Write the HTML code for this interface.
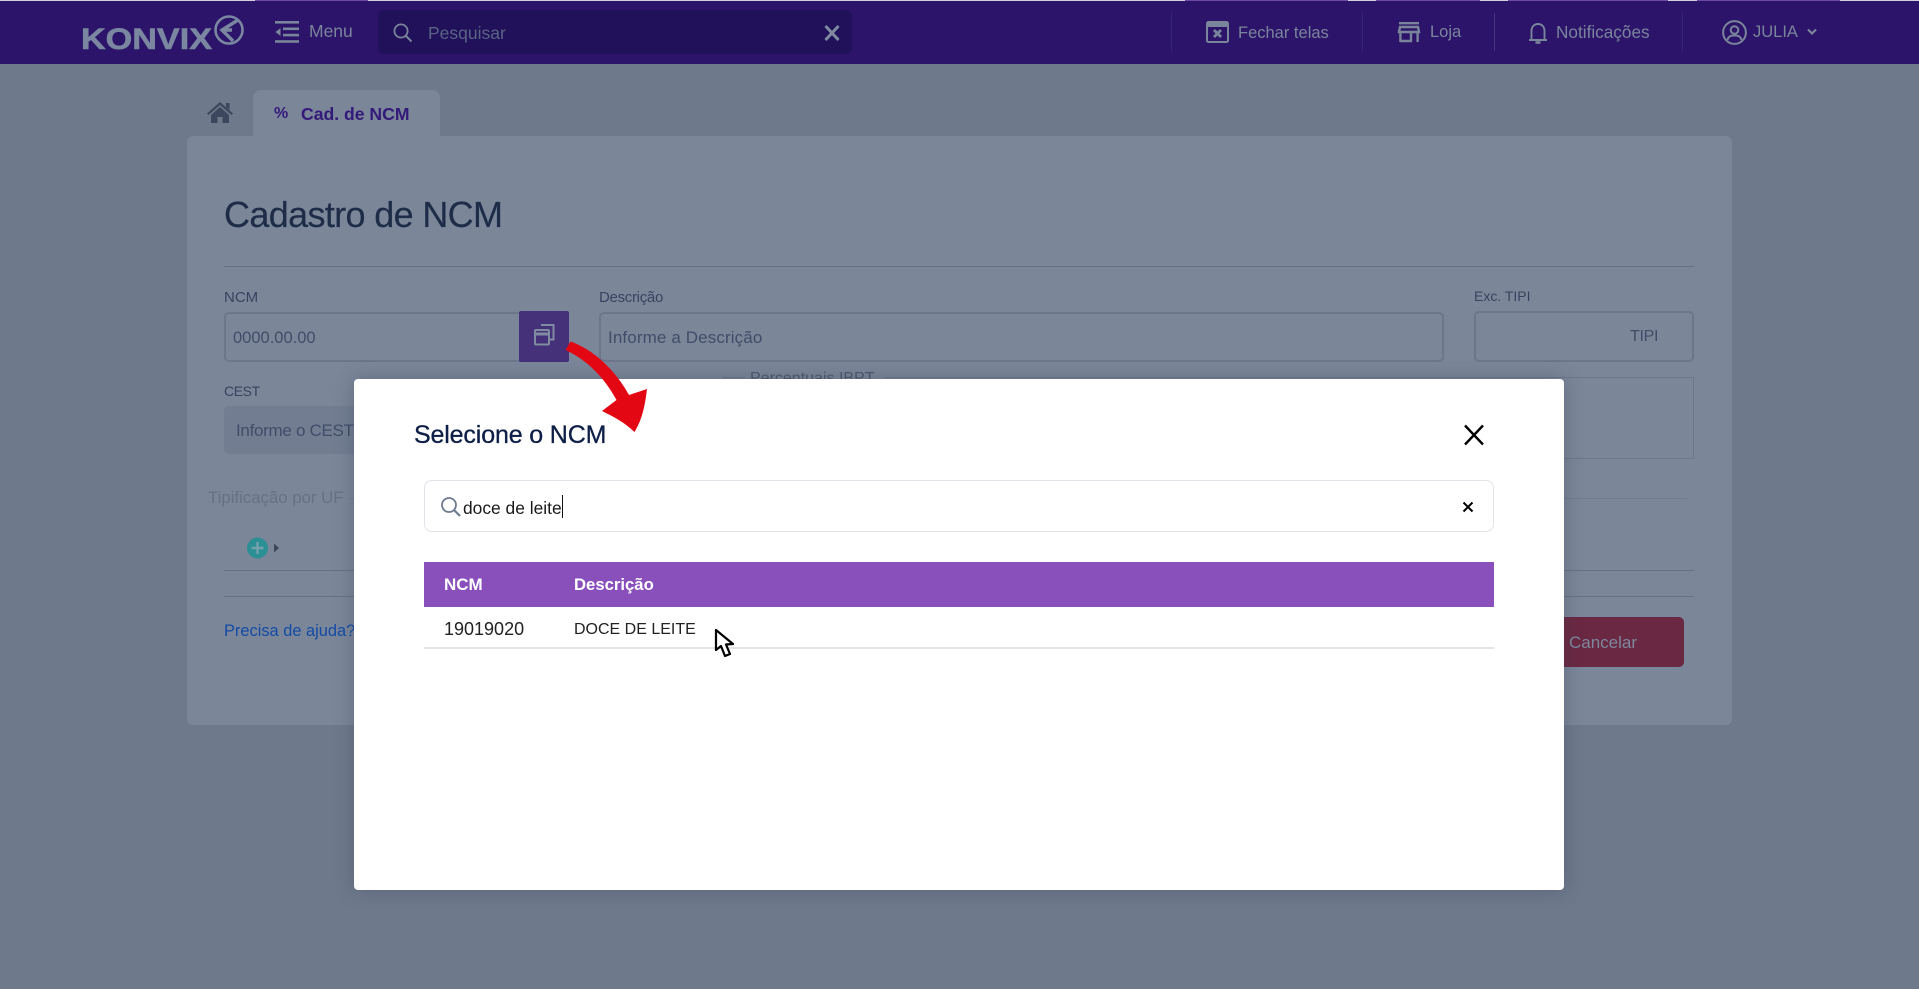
<!DOCTYPE html>
<html lang="pt-BR"><head><meta charset="utf-8"><title>Cadastro de NCM</title>
<style>
*{box-sizing:border-box}
html,body{margin:0;padding:0}
body{width:1919px;height:989px;position:relative;overflow:hidden;background:#6e798c;font-family:"Liberation Sans",sans-serif}
.a{position:absolute}
.t{position:absolute;white-space:nowrap;line-height:20px;height:20px}
.hd{color:#7a849a;font-size:16.5px}
.lb{color:#38445f;font-size:15px}
.ph{color:#414d68;font-size:17px}
svg{position:absolute;overflow:visible}
</style></head><body>

<!-- top bar -->
<div class="a" style="left:0;top:0;width:1919px;height:64px;background:#2c146b"></div>
<div class="a" style="left:0;top:0;width:1919px;height:1px;background:#d5cfdd"></div>
<div class="a" style="left:255px;top:0;width:113px;height:1px;background:#6f4ba6"></div>
<div class="a" style="left:1185px;top:0;width:163px;height:1px;background:#6f4ba6"></div>
<div class="a" style="left:1376px;top:0;width:104px;height:1px;background:#6f4ba6"></div>
<div class="a" style="left:1508px;top:0;width:160px;height:1px;background:#6f4ba6"></div>
<div class="a" style="left:1697px;top:0;width:143px;height:1px;background:#6f4ba6"></div>

<!-- logo -->
<svg style="left:0;top:0" width="260" height="64">
<text x="81" y="49" font-family="Liberation Sans" font-weight="700" font-size="30" fill="#7b86a0" stroke="#7b86a0" stroke-width=".6" textLength="131" lengthAdjust="spacingAndGlyphs">KONVIX</text>
<circle cx="229" cy="30" r="13.5" fill="none" stroke="#7b86a0" stroke-width="2.6"/>
<path d="M238 20 L222 30 L233 41 M222 30 L232 30" fill="none" stroke="#7b86a0" stroke-width="3.4"/>
</svg>

<!-- menu -->
<svg style="left:275px;top:21px" width="24" height="22" fill="#7a849a">
<rect x="0" y="0" width="24" height="2.6"/><rect x="8" y="6.5" width="16" height="2.6"/><rect x="8" y="12.8" width="16" height="2.6"/><rect x="0" y="19.2" width="24" height="2.6"/>
<path d="M5.5 7 L0.5 11 L5.5 15z"/>
</svg>
<div class="t hd" style="left:309px;top:21px;font-size:17.5px">Menu</div>

<!-- search -->
<div class="a" style="left:378px;top:10px;width:474px;height:44px;background:#20115a;border-radius:6px"></div>
<svg style="left:393px;top:23px" width="20" height="20" fill="none" stroke="#7a849a" stroke-width="1.8">
<circle cx="8" cy="8" r="6.6"/><path d="M12.8 12.8 L18.5 18.5" stroke-width="2"/></svg>
<div class="t" style="left:428px;top:23px;font-size:17.5px;color:#5b6385">Pesquisar</div>
<svg style="left:824px;top:25px" width="16" height="16" fill="none" stroke="#7f8aa1" stroke-width="3"><path d="M1.5 1 L14.5 15 M14.5 1 L1.5 15"/></svg>

<!-- header right -->
<div class="a" style="left:1171px;top:13px;width:1px;height:38px;background:#3a2677"></div>
<div class="a" style="left:1362px;top:13px;width:1px;height:38px;background:#3a2677"></div>
<div class="a" style="left:1494px;top:13px;width:1px;height:38px;background:#453380"></div>
<div class="a" style="left:1682px;top:13px;width:1px;height:38px;background:#3a2677"></div>

<svg style="left:1206px;top:21px" width="23" height="22"><rect x="1" y="1" width="21" height="20" rx="1.5" fill="none" stroke="#7a849a" stroke-width="2"/><rect x="1" y="1" width="21" height="5" fill="#7a849a"/><path d="M8 9 L15 16 M15 9 L8 16" stroke="#7a849a" stroke-width="2.8"/></svg>
<div class="t hd" style="left:1238px;top:23px">Fechar telas</div>

<svg style="left:1398px;top:22px" width="22" height="21" fill="none" stroke="#7a849a" stroke-width="2.4"><path d="M1 1.2 H21"/><path d="M1 10 L2 5 H20 L21 10 Z"/><path d="M2.4 10 V20 M19.6 10 V20 M2 19 H14 M13 10 V20"/></svg>
<div class="t hd" style="left:1430px;top:22px">Loja</div>

<svg style="left:1528px;top:22px" width="20" height="23" fill="none" stroke="#7a849a" stroke-width="1.9"><path d="M3.5 17 V9 C3.5 5 6 2 10 2 C14 2 16.5 5 16.5 9 V17 M1 18 H19"/><path d="M7.5 20.5 H12.5" stroke-width="2.6"/></svg>
<div class="t hd" style="left:1556px;top:22px;font-size:17.2px">Notificações</div>

<svg style="left:1722px;top:20px" width="25" height="25" fill="none" stroke="#7a849a" stroke-width="2"><circle cx="12.5" cy="12.5" r="11.4"/><circle cx="12.5" cy="10" r="3.8"/><path d="M5.5 20 C6.5 16 9 15.5 12.5 15.5 C16 15.5 18.5 16 19.5 20"/></svg>
<div class="t hd" style="left:1753px;top:22px">JULIA</div>
<svg style="left:1807px;top:28px" width="10" height="8" fill="none" stroke="#7a849a" stroke-width="2.2"><path d="M1 1.5 L5 5.5 L9 1.5"/></svg>

<!-- tabs -->
<svg style="left:207px;top:102px" width="26" height="21" fill="#3c475d"><path d="M13 0 L26 11.5 L24.5 13 L13 3 L1.5 13 L0 11.5 Z"/><path d="M19 1 H22.5 V8 L19 5 Z"/><path d="M4 13 L13 5 L22 13 V21 H15.5 V15 H10.5 V21 H4 Z"/></svg>
<div class="a" style="left:253px;top:90px;width:187px;height:50px;background:#7b8699;border-radius:8px 8px 0 0"></div>
<div class="t" style="left:274px;top:104px;font-size:16px;font-weight:700;color:#33197a">%</div>
<div class="t" style="left:301px;top:104px;font-size:17.6px;font-weight:700;color:#33197a">Cad. de NCM</div>

<!-- card -->
<div class="a" style="left:187px;top:136px;width:1545px;height:589px;background:#7b8699;border-radius:6px"></div>
<div class="t" style="left:224px;top:200px;height:30px;line-height:30px;font-size:36px;letter-spacing:-.65px;color:#1e2c47;-webkit-text-stroke:.2px #1e2c47">Cadastro de NCM</div>
<div class="a" style="left:224px;top:266px;width:1470px;height:1px;background:#667186"></div>

<div class="t lb" style="left:224px;top:288px">NCM</div>
<div class="a" style="left:224px;top:312px;width:300px;height:50px;border:2px solid #6c778b;border-radius:5px"></div>
<div class="t ph" style="left:233px;top:328px;font-size:16.5px">0000.00.00</div>
<div class="a" style="left:519px;top:311px;width:50px;height:51px;background:#45317a;border-radius:2px"></div>
<svg style="left:534px;top:324px" width="21" height="22" fill="none" stroke="#7f8aa1" stroke-width="2"><path d="M7 1 H19.5 V15.5 H15"/><rect x="1" y="6" width="14" height="14.5" rx="1"/><path d="M1 10 H15" stroke-width="3"/></svg>

<div class="t lb" style="left:599px;top:288px;letter-spacing:-.3px">Descrição</div>
<div class="a" style="left:599px;top:312px;width:845px;height:50px;border:2px solid #6c778b;border-radius:5px"></div>
<div class="t ph" style="left:608px;top:328px;letter-spacing:.12px">Informe a Descrição</div>

<div class="t lb" style="left:1474px;top:286px;font-size:14px">Exc. TIPI</div>
<div class="a" style="left:1474px;top:311px;width:220px;height:51px;border:2px solid #6c778b;border-radius:5px"></div>
<div class="t ph" style="left:1630px;top:327px;font-size:16px;letter-spacing:-.3px">TIPI</div>

<div class="t lb" style="left:224px;top:381px;font-size:14px;letter-spacing:-.4px">CEST</div>
<div class="a" style="left:224px;top:406px;width:200px;height:48px;background:#727d91;border-radius:5px"></div>
<div class="t ph" style="left:236px;top:421px;letter-spacing:-.3px">Informe o CEST</div>

<!-- IBPT fieldset -->
<div class="a" style="left:723px;top:377px;width:971px;height:82px;border:1px solid #6c778b"></div>
<div class="a" style="left:745px;top:368px;width:140px;height:12px;background:#7b8699;overflow:hidden"><div class="t lb" style="left:5px;top:1px;font-size:16px;color:#4c5870">Percentuais IBPT</div></div>

<div class="t" style="left:208px;top:488px;font-size:16.8px;color:#667186">Tipificação por UF</div>
<div class="a" style="left:350px;top:498px;width:1337px;height:1px;background:#717c90"></div>
<svg style="left:247px;top:537px" width="34" height="22"><circle cx="10.5" cy="11" r="10.5" fill="#2b8f93"/><path d="M10.5 5 V17 M4.5 11 H16.5" stroke="#74a1ad" stroke-width="2.4"/><path d="M27 6.5 L32 11 L27 15.5Z" fill="#3c475d"/></svg>
<div class="a" style="left:224px;top:570px;width:1470px;height:1px;background:#667186"></div>
<div class="a" style="left:224px;top:596px;width:1470px;height:1px;background:#667186"></div>

<div class="t" style="left:224px;top:621px;font-size:16.4px;color:#134ba6">Precisa de ajuda?</div>
<div class="a" style="left:1500px;top:617px;width:184px;height:50px;background:#6b2842;border-radius:5px"></div>
<div class="t" style="left:1569px;top:633px;font-size:17px;color:#7d889c">Cancelar</div>

<!-- modal -->
<div class="a" style="left:354px;top:379px;width:1210px;height:511px;background:#fff;border-radius:4px;box-shadow:0 0 18px rgba(50,60,80,.35)"></div>
<div class="t" style="left:414px;top:423px;height:24px;line-height:24px;font-size:25px;letter-spacing:-.15px;color:#0e1f47;-webkit-text-stroke:.3px #0e1f47">Selecione o NCM</div>
<svg style="left:1464px;top:425px" width="20" height="20" fill="none" stroke="#000" stroke-width="2.4"><path d="M1 .5 L19 19.5 M19 .5 L1 19.5"/></svg>

<div class="a" style="left:424px;top:480px;width:1070px;height:52px;border:1.5px solid #e2e2e8;border-radius:8px;background:#fff"></div>
<svg style="left:441px;top:497px" width="20" height="20" fill="none" stroke="#6e7a90" stroke-width="1.8"><circle cx="8" cy="8" r="7"/><path d="M13 13 L19 19" stroke-width="2.2"/></svg>
<div class="t" style="left:463px;top:498px;font-size:17.4px;color:#1a1a1a">doce de leite</div>
<div class="a" style="left:562px;top:495px;width:1px;height:23px;background:#111"></div>
<svg style="left:1463px;top:502px" width="10" height="10" fill="none" stroke="#000" stroke-width="2"><path d="M.5 .5 L9.5 9.5 M9.5 .5 L.5 9.5"/></svg>

<div class="a" style="left:424px;top:562px;width:1070px;height:45px;background:#8950bc"></div>
<div class="t" style="left:444px;top:575px;font-size:17px;font-weight:700;color:#fff">NCM</div>
<div class="t" style="left:574px;top:575px;font-size:16.7px;font-weight:700;color:#fff">Descrição</div>
<div class="t" style="left:444px;top:619px;font-size:18px;color:#222">19019020</div>
<div class="t" style="left:574px;top:620px;font-size:16px;color:#222">DOCE DE LEITE</div>
<div class="a" style="left:424px;top:647px;width:1070px;height:2px;background:#e4e4e4"></div>

<!-- cursor -->
<svg style="left:714px;top:628px" width="22" height="31"><path d="M2 2 L2 22 L7 18 L11 28 L16 26 L12 16.5 L19 16 Z" fill="#fff" stroke="#000" stroke-width="2.2" stroke-linejoin="round"/></svg>

<!-- red arrow -->
<svg style="left:0;top:0" width="1919" height="989"><path d="M570.5 341.5 C592 349 614 368 629 395 L647 389 C645 406 642 420 634.5 432 C624 422 614 417 602 411 L616.5 400 C604 377 587 360 565.5 350 Z" fill="#e30613"/></svg>

</body></html>
